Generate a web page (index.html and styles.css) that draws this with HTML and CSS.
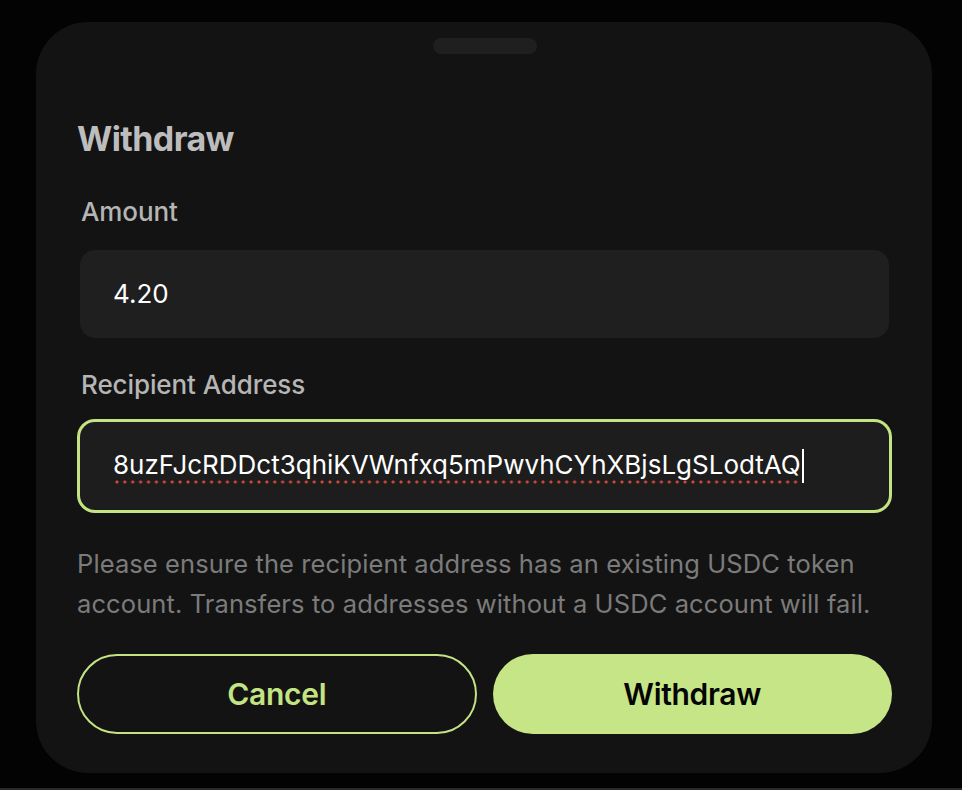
FILE: index.html
```html
<!DOCTYPE html>
<html lang="en">
<head>
<meta charset="utf-8">
<title>Withdraw</title>
<link rel="stylesheet" href="styles.css">
</head>
<body>
<div class="page">
  <div class="sheet">
    <div class="handle"></div>
    <h1 class="title">Withdraw</h1>
    <label class="label label-amount">Amount</label>
    <div class="field">
      <span class="value">4.20</span>
    </div>
    <label class="label label-recipient">Recipient Address</label>
    <div class="field field-focus">
      <span class="value value-misspelled">8uzFJcRDDct3qhiKVWnfxq5mPwvhCYhXBjsLgSLodtAQ</span><span class="caret"></span>
    </div>
    <p class="hint">Please ensure the recipient address has an existing USDC token account. Transfers to addresses without a USDC account will fail.</p>
    <div class="actions">
      <button class="btn btn-outline">Cancel</button>
      <button class="btn btn-primary">Withdraw</button>
    </div>
  </div>
  <div class="bottom-line"></div>
</div>
</body>
</html>
```

FILE: styles.css
```css
* { box-sizing: border-box; }

html, body {
  margin: 0;
  padding: 0;
  background: #030303;
  height: 100%;
}

body {
  font-family: Inter, "Noto Sans", "Liberation Sans", sans-serif;
  overflow: hidden;
}

.page {
  height: 790px;
  display: flex;
  flex-direction: column;
  align-items: flex-start;
  padding-top: 22px;
}

.sheet {
  margin-left: 36px;
  width: 896px;
  height: 751px;
  background: #131313;
  border-radius: 52px;
  padding: 16px 40px 0 41px;
  display: flex;
  flex-direction: column;
}

.handle {
  align-self: center;
  width: 104px;
  height: 16px;
  border-radius: 8px;
  background: #1f1f1f;
  margin-left: 1px;
}

.title {
  margin: 65px 0 0 0;
  font-size: 34px;
  line-height: 40px;
  font-weight: 700;
  color: #bdbdbd;
  letter-spacing: -0.6px;
}

.label {
  display: block;
  font-size: 26px;
  line-height: 30px;
  font-weight: 500;
  color: #b5b5b5;
  padding-left: 4px;
  letter-spacing: -0.1px;
}

.label-amount { margin-top: 38px; }
.label-recipient { margin-top: 32px; }

.field {
  margin: 23px 3px 0 3px;
  height: 88px;
  border-radius: 15px;
  background: #1f1f1f;
  display: flex;
  align-items: center;
  padding-left: 33px;
  color: #ffffff;
  font-size: 26px;
  line-height: 32px;
}

.field-focus {
  margin-top: 22px;
  border-radius: 15px;
  box-shadow: 0 0 0 3px #c4e484;
  background: #1d1d1d;
}

.value-misspelled {
  padding-bottom: 3px;
  background-image: radial-gradient(circle, #d4473c 1.3px, transparent 1.8px);
  background-size: 7.9px 4px;
  background-repeat: repeat-x;
  background-position: 0 100%;
  letter-spacing: 0;
}

.caret {
  display: inline-block;
  width: 2px;
  height: 34px;
  background: #ffffff;
  margin-left: 1px;
}

.hint {
  margin: 34px 0 0 0;
  font-size: 25.5px;
  line-height: 40px;
  color: #7b7b7b;
  font-weight: 400;
  letter-spacing: 0.1px;
}

.actions {
  margin-top: 30px;
  display: grid;
  grid-template-columns: 1fr 1fr;
  gap: 16px;
}

.btn {
  height: 80px;
  border-radius: 40px;
  font-family: inherit;
  font-size: 30px;
  font-weight: 600;
  letter-spacing: -0.3px;
  cursor: pointer;
}

.btn-outline {
  background: transparent;
  border: 2px solid #c4e484;
  color: #c4e484;
}

.btn-primary {
  background: #c6e587;
  border: none;
  color: #050505;
}

.bottom-line {
  margin-top: auto;
  width: 100%;
  height: 2px;
  background: #2a2a2a;
}
```
